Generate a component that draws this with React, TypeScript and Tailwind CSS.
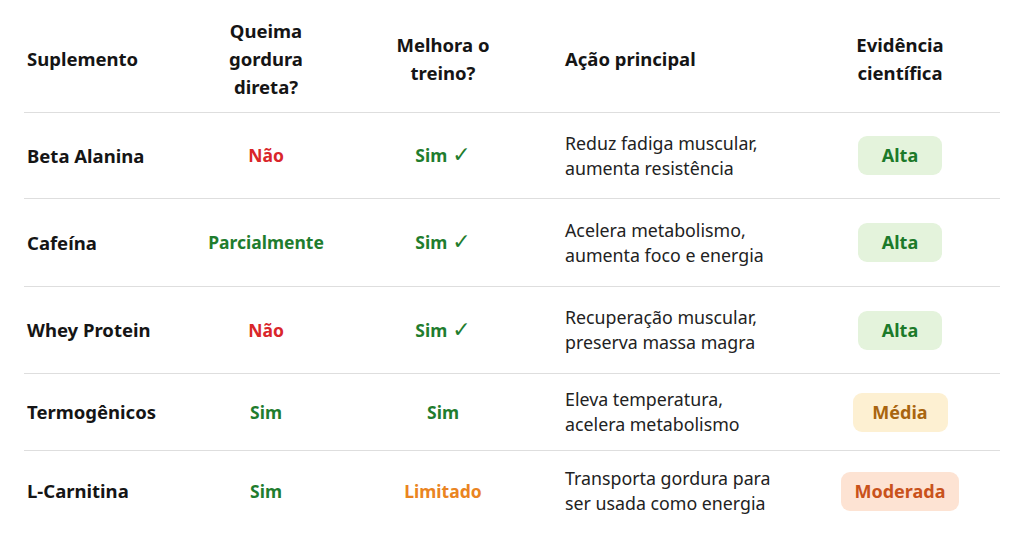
import React from "react";

type Tone = "green" | "red" | "orange";

type Row = {
  nome: string;
  queima: { text: string; tone: Tone };
  treino: { text: string; tone: Tone; check?: boolean };
  acao: [string, string];
  evidencia: "Alta" | "Média" | "Moderada";
  h: string;
};

const rows: Row[] = [
  {
    nome: "Beta Alanina",
    queima: { text: "Não", tone: "red" },
    treino: { text: "Sim", tone: "green", check: true },
    acao: ["Reduz fadiga muscular,", "aumenta resistência"],
    evidencia: "Alta",
    h: "h-[86px]",
  },
  {
    nome: "Cafeína",
    queima: { text: "Parcialmente", tone: "green" },
    treino: { text: "Sim", tone: "green", check: true },
    acao: ["Acelera metabolismo,", "aumenta foco e energia"],
    evidencia: "Alta",
    h: "h-[88px]",
  },
  {
    nome: "Whey Protein",
    queima: { text: "Não", tone: "red" },
    treino: { text: "Sim", tone: "green", check: true },
    acao: ["Recuperação muscular,", "preserva massa magra"],
    evidencia: "Alta",
    h: "h-[87px]",
  },
  {
    nome: "Termogênicos",
    queima: { text: "Sim", tone: "green" },
    treino: { text: "Sim", tone: "green" },
    acao: ["Eleva temperatura,", "acelera metabolismo"],
    evidencia: "Média",
    h: "h-[77px]",
  },
  {
    nome: "L-Carnitina",
    queima: { text: "Sim", tone: "green" },
    treino: { text: "Limitado", tone: "orange" },
    acao: ["Transporta gordura para", "ser usada como energia"],
    evidencia: "Moderada",
    h: "h-[80px]",
  },
];

const toneClass: Record<Tone, string> = {
  green: "text-[#1f7d2e]",
  red: "text-[#d9262a]",
  orange: "text-[#ea8421]",
};

const pillClass = {
  Alta: "bg-[#e4f3dc] text-[#1c7a2a] w-[84px]",
  Média: "bg-[#fdf0d2] text-[#a9650f] w-[95px]",
  Moderada: "bg-[#fde3d3] text-[#c9521b] w-[118px]",
};

const cols = "grid grid-cols-[158px_168px_186px_264px_200px]";

export default function App() {
  return (
    <div
      className="h-[543px] w-[1024px] overflow-hidden bg-white px-[24px] text-[#151515]"
      style={{ fontFamily: '"Noto Sans", "Open Sans", sans-serif' }}
    >
      <div className={`${cols} h-[113px] items-center border-b border-[#dedede] pt-[5px] text-[18.5px] leading-[28px] font-bold`}>
        <div className="pl-[3px]">Suplemento</div>
        <div className="text-center">
          Queima
          <br />
          gordura
          <br />
          direta?
        </div>
        <div className="text-center">
          Melhora o
          <br />
          treino?
        </div>
        <div className="pl-[29px]">Ação principal</div>
        <div className="text-center">
          Evidência
          <br />
          científica
        </div>
      </div>

      {rows.map((r, i) => (
        <div
          key={r.nome}
          className={`${cols} ${r.h} items-center ${
            i < rows.length - 1 ? "border-b border-[#dedede]" : ""
          }`}
        >
          <div className="pl-[3px] text-[18.5px] font-bold">{r.nome}</div>
          <div className={`text-center text-[17.5px] font-bold ${toneClass[r.queima.tone]}`}>
            {r.queima.text}
          </div>
          <div className={`text-center text-[17.5px] font-bold ${toneClass[r.treino.tone]}`}>
            {r.treino.text}
            {r.treino.check && (
              <span className="ml-[5px] text-[22px] leading-none font-normal" style={{ fontFamily: '"DejaVu Sans", sans-serif' }}>
                ✓
              </span>
            )}
          </div>
          <div className="pl-[29px] text-[17.8px] leading-[25px] text-[#222]">
            {r.acao[0]}
            <br />
            {r.acao[1]}
          </div>
          <div className="flex justify-center">
            <span
              className={`flex h-[39px] items-center justify-center rounded-[9px] text-[18px] font-bold ${pillClass[r.evidencia]}`}
            >
              {r.evidencia}
            </span>
          </div>
        </div>
      ))}
    </div>
  );
}
